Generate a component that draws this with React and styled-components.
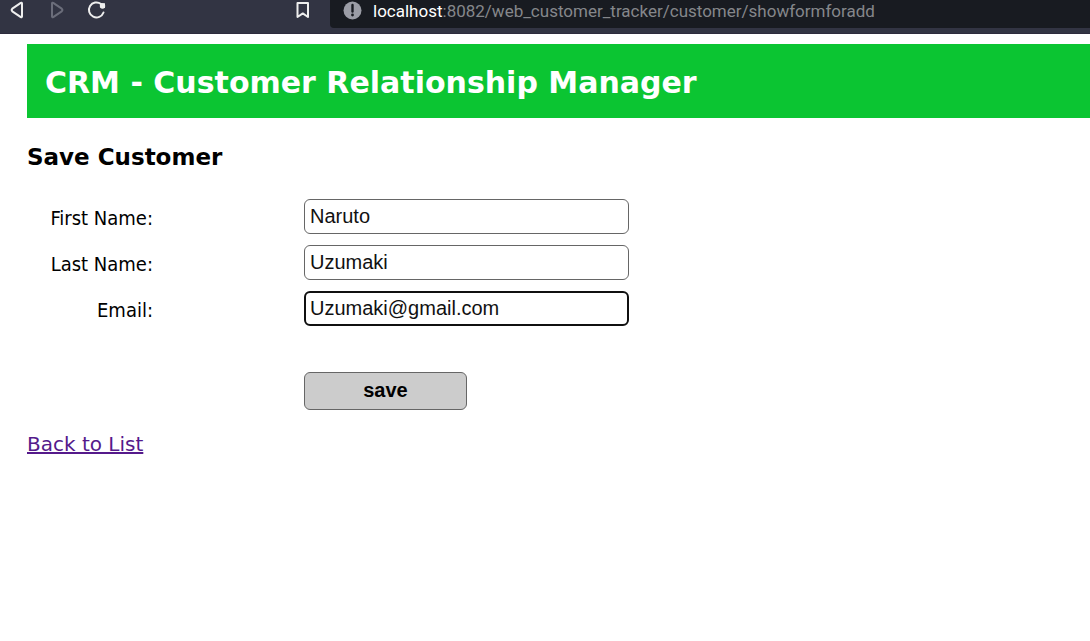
import React from "react";
import styled, { createGlobalStyle } from "styled-components";

const GlobalStyle = createGlobalStyle`
  * { box-sizing: border-box; }
  body {
    margin: 0;
    background: #fff;
    color: #000;
    font-family: Verdana, "DejaVu Sans", sans-serif;
    overflow-x: hidden;
  }
`;

const BrowserBar = styled.nav`
  display: flex;
  align-items: flex-start;
  height: 34px;
  background: #323443;
  border-bottom: 1px solid #2d2b3d;
`;

const NavButtons = styled.div`
  display: flex;
  flex: 0 0 330px;
  padding-right: 16px;
`;

const IconButton = styled.button`
  display: block;
  width: ${(p) => (p.$wide ? "40px" : "22px")};
  height: 22px;
  margin-left: ${(p) => (p.$last ? "auto" : "0")};
  padding: 0;
  border: 0;
  background: none;
  color: ${(p) => (p.$dim ? "#6b6d7a" : "#eeeeee")};

  svg { display: block; }
`;

const AddressBar = styled.div`
  display: flex;
  flex: 1;
  min-width: 0;
  height: 28px;
  padding-left: 13px;
  border-radius: 0 0 0 4px;
  background: #181b21;
`;

const Url = styled.span`
  margin-left: 11px;
  font: 17px/22px Roboto, sans-serif;
  white-space: nowrap;
  color: #85878b;
`;

const Host = styled.span`
  color: #fff;
`;

const Page = styled.main`
  padding: 10px 0 0 27px;
`;

const Banner = styled.header`
  padding: 22px 18px 18px;
  background: #0bc532;
  color: #fff;
`;

const Title = styled.h1`
  margin: 0;
  font-size: 30px;
  line-height: 34px;
`;

const Heading = styled.h2`
  margin: 25px 0 27px;
  font-size: 23px;
  line-height: 29px;
`;

const Form = styled.form`
  display: grid;
  gap: 11px;
`;

const Row = styled.div`
  display: grid;
  grid-template-columns: 126px 325px;
  column-gap: 151px;
  align-items: center;
`;

const Label = styled.label`
  padding-top: 3px;
  text-align: right;
  font: 20px/32px Tahoma, "DejaVu Sans Condensed", sans-serif;
`;

const Input = styled.input`
  width: 100%;
  height: 35px;
  padding: 0 5px;
  border: 1px solid #666;
  border-radius: 6px;
  outline: none;
  background: #fff;
  color: #111;
  font: 20px "Liberation Sans", Arial, sans-serif;

  &:focus {
    padding: 0 4px;
    border: 2px solid #101010;
  }
`;

const SaveButton = styled.button`
  grid-column: 2;
  width: 163px;
  height: 38px;
  margin-top: 35px;
  padding: 0 0 2px;
  border: 1px solid #666;
  border-radius: 6px;
  background: #ccc;
  color: #000;
  font: bold 20px "Liberation Sans", Arial, sans-serif;
`;

const BackLink = styled.a`
  display: inline-block;
  margin-top: 20px;
  color: #551a8b;
  font-size: 20px;
  line-height: 28px;
`;

const fields = [
  { id: "firstName", label: "First Name:", value: "Naruto" },
  { id: "lastName", label: "Last Name:", value: "Uzumaki" },
  { id: "email", label: "Email:", value: "Uzumaki@gmail.com", focused: true },
];

const stroke = { fill: "none", stroke: "currentColor", strokeWidth: 2, strokeLinejoin: "round", strokeLinecap: "round" };

export default function App() {
  return (
    <>
      <GlobalStyle />
      <BrowserBar>
        <NavButtons>
          <IconButton $wide aria-label="Back">
            <svg width="40" height="22" {...stroke}>
              <path d="M22 3.4v13.2q-.2 1-1.2.5L12.3 11.3q-1.3-1.3 0-2.6L20.8 2.9q1-.5 1.2.5Z" />
            </svg>
          </IconButton>
          <IconButton $wide $dim aria-label="Forward">
            <svg width="40" height="22" {...stroke}>
              <path d="M12 3.4v13.2q.2 1 1.2.5l8.5-5.8q1.3-1.3 0-2.6L13.2 2.9q-1-.5-1.2.5Z" />
            </svg>
          </IconButton>
          <IconButton $wide aria-label="Reload">
            <svg width="40" height="22" {...stroke}>
              <path d="M23.5 12.5A7.5 7.5 0 1 1 21 4" />
              <path d="M20.5 3.2H25V8h-3.6L20 6.6Z" fill="currentColor" stroke="none" />
              <circle cx="22.5" cy="6" r="2.7" fill="currentColor" stroke="none" />
            </svg>
          </IconButton>
          <IconButton $last aria-label="Bookmark">
            <svg width="22" height="22" {...stroke}>
              <path d="M5.5 3h10.5v14l-5.2-3.6L5.5 17Z" />
            </svg>
          </IconButton>
        </NavButtons>
        <AddressBar>
          <svg width="19" height="22" aria-hidden="true">
            <circle cx="9.5" cy="10.5" r="9" fill="#9b9da6" />
            <path d="M9.5 5v6.5" stroke="#181b21" strokeWidth="2.4" strokeLinecap="round" />
            <circle cx="9.5" cy="15" r="1.4" fill="#181b21" />
          </svg>
          <Url><Host>localhost</Host>:8082/web_customer_tracker/customer/showformforadd</Url>
        </AddressBar>
      </BrowserBar>
      <Page>
        <Banner>
          <Title>CRM - Customer Relationship Manager</Title>
        </Banner>
        <Heading>Save Customer</Heading>
        <Form onSubmit={(e) => e.preventDefault()}>
          {fields.map((f) => (
            <Row key={f.id}>
              <Label htmlFor={f.id}>{f.label}</Label>
              <Input id={f.id} name={f.id} defaultValue={f.value} autoFocus={f.focused} />
            </Row>
          ))}
          <Row>
            <SaveButton type="submit">save</SaveButton>
          </Row>
        </Form>
        <BackLink href="#list">Back to List</BackLink>
      </Page>
    </>
  );
}
